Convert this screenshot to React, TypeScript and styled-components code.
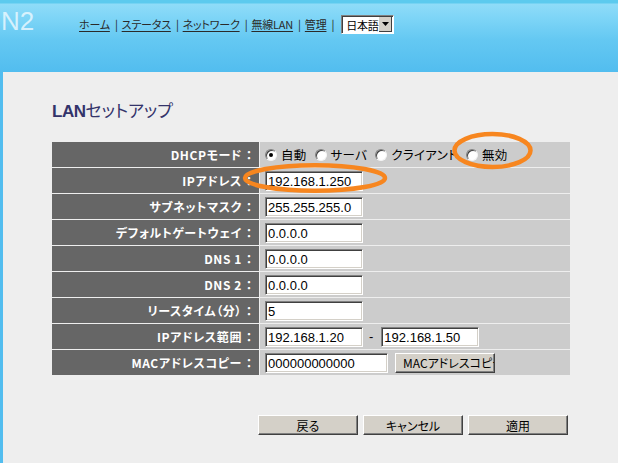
import styled, { createGlobalStyle } from 'styled-components';

const GlobalStyle = createGlobalStyle`
  html, body {
    margin: 0;
    padding: 0;
    background: #eeeeee;
  }
  body {
    font-family: "Noto Sans CJK JP", "Liberation Sans", sans-serif;
    font-feature-settings: "palt";
  }
`;

type TRow = {
  label: string;
  kind: 'dhcp' | 'input' | 'range' | 'mac';
  value?: string;
};

const rows: TRow[] = [
  { label: 'DHCPモード', kind: 'dhcp' },
  { label: 'IPアドレス', kind: 'input', value: '192.168.1.250' },
  { label: 'サブネットマスク', kind: 'input', value: '255.255.255.0' },
  { label: 'デフォルトゲートウェイ', kind: 'input', value: '0.0.0.0' },
  { label: 'DNS 1', kind: 'input', value: '0.0.0.0' },
  { label: 'DNS 2', kind: 'input', value: '0.0.0.0' },
  { label: 'リースタイム（分）', kind: 'input', value: '5' },
  { label: 'IPアドレス範囲', kind: 'range' },
  { label: 'MACアドレスコピー', kind: 'mac' },
];

const navLinks = ['ホーム', 'ステータス', 'ネットワーク', '無線LAN', '管理'];

const dhcpModes = [
  { text: '自動', checked: true },
  { text: 'サーバ', checked: false },
  { text: 'クライアント', checked: false },
  { text: '無効', checked: false },
];

const App = (): JSX.Element => {
  return (
    <Page>
      <GlobalStyle />
      <Header>
        <Logo>N2</Logo>
        <Nav>
          {navLinks.map((link) => (
            <NavItem key={link}>
              <NavLink href="#">{link}</NavLink>
              <Separator>|</Separator>
            </NavItem>
          ))}
          <LangSelect>
            <LangText>日本語</LangText>
            <LangArrow>
              <svg width="7" height="4" viewBox="0 0 7 4">
                <path d="M0 0h7L3.5 4z" fill="#000" />
              </svg>
            </LangArrow>
          </LangSelect>
        </Nav>
      </Header>
      <Main>
        <Title>
          <strong>LAN</strong>セットアップ
        </Title>
        <FormGrid>
          {rows.map((row) => (
            <Row key={row.label}>
              <Label>
                {row.label}
                <Colon>：</Colon>
              </Label>
              <Value>
                {row.kind === 'dhcp' &&
                  dhcpModes.map((mode) => (
                    <RadioOption key={mode.text}>
                      <Radio $checked={mode.checked} />
                      {mode.text}
                    </RadioOption>
                  ))}
                {row.kind === 'input' && <TextBox $width={98} defaultValue={row.value} />}
                {row.kind === 'range' && (
                  <>
                    <TextBox $width={98} defaultValue="192.168.1.20" />
                    <Dash>-</Dash>
                    <TextBox $width={98} defaultValue="192.168.1.50" />
                  </>
                )}
                {row.kind === 'mac' && (
                  <>
                    <TextBox $width={123} defaultValue="000000000000" />
                    <CopyButton>MACアドレスコピー</CopyButton>
                  </>
                )}
              </Value>
            </Row>
          ))}
        </FormGrid>
        <ButtonBar>
          <ActionButton>戻る</ActionButton>
          <ActionButton>キャンセル</ActionButton>
          <ActionButton>適用</ActionButton>
        </ButtonBar>
      </Main>
      <Marks width="618" height="463" viewBox="0 0 618 463">
        <ellipse cx="492.5" cy="150.5" rx="38" ry="16.5" fill="none" stroke="#f7861f" strokeWidth="4.5" />
        <ellipse cx="315" cy="178" rx="70" ry="12.8" fill="none" stroke="#f7861f" strokeWidth="4.5" />
      </Marks>
    </Page>
  );
};

const Page = styled.div`
  position: relative;
  width: 618px;
  height: 463px;
  overflow: hidden;
  background: #eeeeee;
`;

const Header = styled.header`
  height: 72px;
  display: flex;
  align-items: flex-start;
  background: linear-gradient(
    180deg,
    #5ccaee 0,
    #5ccaee 3px,
    #8fdcf8 4px,
    #80d6f7 16px,
    #64c8f2 40px,
    #52bdef 72px
  );
`;

const Logo = styled.div`
  width: 79px;
  box-sizing: border-box;
  padding: 6px 0 0 1px;
  font: 26px/30px "Liberation Sans", "DejaVu Sans", sans-serif;
  color: rgba(240, 250, 255, 0.78);
`;

const Nav = styled.nav`
  display: flex;
  align-items: center;
  height: 20px;
  margin-top: 14px;
  font-size: 11px;
  letter-spacing: -0.2px;
`;

const NavItem = styled.span`
  display: flex;
  align-items: center;
`;

const NavLink = styled.a`
  color: #2a2a2a;
  text-decoration: underline;
  text-underline-offset: 2px;
`;

const Separator = styled.span`
  color: #222;
  font-size: 11px;
  margin: 0 4px 0 5px;
`;

const LangSelect = styled.div`
  display: flex;
  align-items: stretch;
  width: 53px;
  height: 19px;
  box-sizing: border-box;
  margin-left: 3px;
  background: #fff;
  border: 1px solid;
  border-color: #808080 #fff #fff #808080;
  box-shadow: inset 1px 1px 0 #404040;
`;

const LangText = styled.span`
  flex: 1;
  overflow: hidden;
  white-space: nowrap;
  padding: 1px 0 0 4px;
  font-size: 11px;
  line-height: 16px;
  color: #000;
`;

const LangArrow = styled.span`
  flex: none;
  width: 13px;
  margin: 1px 1px 1px 0;
  display: flex;
  align-items: center;
  justify-content: center;
  background: #d4d0c8;
  border-right: 1px solid #404040;
  border-bottom: 1px solid #404040;
  box-sizing: border-box;
`;

const Main = styled.main`
  height: 391px;
  box-sizing: border-box;
  border-left: 3px solid #52bdef;
  padding: 28px 0 0 49px;
`;

const Title = styled.h1`
  margin: 0;
  height: 20px;
  font-size: 17px;
  line-height: 20px;
  font-weight: normal;
  color: #33336a;

  strong {
    font-family: "Liberation Sans", sans-serif;
    font-weight: bold;
    letter-spacing: -0.5px;
  }
`;

const FormGrid = styled.div`
  display: grid;
  grid-template-columns: 207px 310px;
  grid-auto-rows: 25px;
  gap: 1px;
  width: 518px;
  margin-top: 22px;
`;

const Row = styled.div`
  display: contents;
`;

const Label = styled.div`
  display: flex;
  align-items: center;
  justify-content: flex-end;
  padding-right: 4px;
  background: #666666;
  color: #ffffff;
  font-size: 12px;
  font-weight: bold;
  letter-spacing: 0.6px;
  white-space: nowrap;
`;

const Colon = styled.span`
  font-feature-settings: normal;
  letter-spacing: 0;
  margin-left: 1px;
`;

const Value = styled.div`
  display: flex;
  align-items: center;
  padding-left: 5px;
  background: #cccccc;
  font-size: 12.5px;
  color: #000;
`;

const RadioOption = styled.label`
  display: flex;
  align-items: center;
  gap: 4px;
  margin-right: 8px;
  white-space: nowrap;
  letter-spacing: 0.3px;
`;

const Radio = styled.span<{ $checked: boolean }>`
  position: relative;
  width: 12px;
  height: 12px;
  box-sizing: border-box;
  border-radius: 50%;
  background: #fff;
  border: 1px solid;
  border-color: #808080 #f4f4f4 #f4f4f4 #808080;
  box-shadow: inset 1px 1px 0 #404040;

  &::after {
    content: '';
    display: ${({ $checked }) => ($checked ? 'block' : 'none')};
    position: absolute;
    left: 3px;
    top: 3px;
    width: 4px;
    height: 4px;
    border-radius: 50%;
    background: #000;
  }
`;

const TextBox = styled.input<{ $width: number }>`
  width: ${({ $width }) => $width}px;
  height: 20px;
  box-sizing: border-box;
  margin: 0;
  padding: 1px 2px 0;
  background: #fff;
  border: 1px solid;
  border-color: #808080 #fff #fff #808080;
  box-shadow: inset 1px 1px 0 #404040, inset -1px -1px 0 #d4d0c8;
  font: 13px "Liberation Sans", Arial, sans-serif;
  color: #000;
  outline: none;
`;

const Dash = styled.span`
  margin: 0 8px 0 6px;
  font: 13px "Liberation Sans", sans-serif;
`;

const Button = styled.button`
  height: 20px;
  width: 100px;
  box-sizing: border-box;
  margin: 0;
  background: #d4d0c8;
  border: 1px solid;
  border-color: #fff #404040 #404040 #fff;
  box-shadow: inset -1px -1px 0 #808080;
  font: 12px "Noto Sans CJK JP", sans-serif;
  font-feature-settings: "palt";
  color: #000;
  cursor: pointer;
`;

const CopyButton = styled(Button)`
  margin-left: 7px;
  padding: 0 0 0 7px;
  text-align: left;
  white-space: nowrap;
  overflow: hidden;
`;

const ActionButton = styled(Button)`
  padding: 0;
`;

const ButtonBar = styled.div`
  display: flex;
  gap: 5px;
  margin-top: 40px;
  padding-left: 206px;
`;

const Marks = styled.svg`
  position: absolute;
  left: 0;
  top: 0;
  pointer-events: none;
`;

export default App;
